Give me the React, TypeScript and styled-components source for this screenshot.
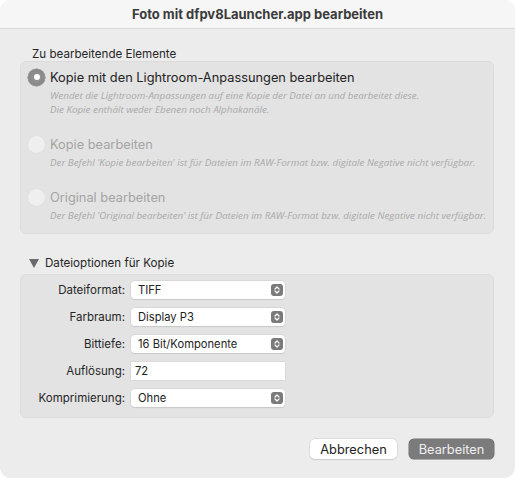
import React from "react";
import styled, { createGlobalStyle } from "styled-components";

const Global = createGlobalStyle`
  html, body { margin: 0; padding: 0; background: #ffffff; }
  body { font-family: Inter, "Liberation Sans", sans-serif; -webkit-font-smoothing: antialiased; }
  * { box-sizing: border-box; }
`;

const Window = styled.div`
  width: 515px;
  height: 478px;
  background: #ececec;
  border-radius: 11px;
  overflow: hidden;
  display: flex;
  flex-direction: column;
`;

const TitleBar = styled.div`
  height: 29px;
  flex: none;
  background: #f6f6f6;
  border-bottom: 1px solid #d9d9d9;
  display: flex;
  align-items: center;
  justify-content: center;
  font-size: 13px;
  font-weight: 700;
  color: #3b3b3b;
`;

const Body = styled.div`
  width: 515px;
  padding: 0 21px 0 20px;
  display: flex;
  flex-direction: column;
`;

const SectionLabel = styled.div<{ $top: number }>`
  font-size: 11.6px;
  color: #262626;
  height: 16px;
  line-height: 16px;
  margin-top: ${(p) => p.$top}px;
  padding-left: 12px;
  display: flex;
  align-items: center;
  gap: 6px;
`;

const Group = styled.div<{ $h: number; $top: number }>`
  margin-top: ${(p) => p.$top}px;
  height: ${(p) => p.$h}px;
  background: #e3e3e3;
  border: 1px solid #dcdcdc;
  border-radius: 6px;
  overflow: hidden;
`;

const OptionList = styled.div`
  display: flex;
  flex-direction: column;
  padding: 6px 0 0 7px;
`;

const Option = styled.div<{ $gap: number }>`
  margin-bottom: ${(p) => p.$gap}px;
`;

const OptionHead = styled.div`
  display: flex;
  align-items: center;
  gap: 5px;
  height: 18px;
`;

const Radio = styled.span<{ $on?: boolean }>`
  width: 17px;
  height: 17px;
  border-radius: 50%;
  flex: none;
  display: flex;
  align-items: center;
  justify-content: center;
  background: ${(p) =>
    p.$on ? "radial-gradient(circle, #9a9a9a 0%, #7d7d7d 100%)" : "#efefef"};
  box-shadow: ${(p) => (p.$on ? "0 0 0 0.5px #777" : "0 0 0 0.5px #dcdcdc")};
  &::after {
    content: "";
    display: ${(p) => (p.$on ? "block" : "none")};
    width: 6px;
    height: 6px;
    border-radius: 50%;
    background: #fff;
  }
`;

const OptionTitle = styled.span<{ $dim?: boolean }>`
  font-size: 12.8px;
  color: ${(p) => (p.$dim ? "#a3a3a3" : "#222")};
`;

const Desc = styled.div`
  margin: 3px 0 0 22px;
  font-family: "Open Sans", "Liberation Sans", sans-serif;
  font-style: italic;
  font-size: 9.8px;
  line-height: 14px;
  color: #a9a9a9;
`;

const Triangle = styled.span`
  width: 0;
  height: 0;
  border-left: 5px solid transparent;
  border-right: 5px solid transparent;
  border-top: 9px solid #6a6a6a;
  margin-left: -3px;
`;

const Form = styled.div`
  display: grid;
  grid-template-columns: 104px 154px;
  column-gap: 6px;
  row-gap: 9px;
  padding-top: 6px;
  align-items: center;
`;

const FieldLabel = styled.div`
  text-align: right;
  font-size: 11.5px;
  color: #262626;
`;

const Popup = styled.div`
  height: 18px;
  background: #fff;
  border-radius: 4px;
  box-shadow: 0 0 0 0.5px #cfcfcf, 0 0.5px 1px rgba(0, 0, 0, 0.15);
  display: flex;
  align-items: center;
  justify-content: space-between;
  padding: 0 2px 0 7px;
  font-size: 11.2px;
  color: #222;
`;

const Stepper = styled.span`
  width: 12px;
  height: 12px;
  border-radius: 3px;
  background: #7a7a7a;
  display: flex;
  align-items: center;
  justify-content: center;
`;

const TextField = styled.div`
  height: 18px;
  background: #fff;
  box-shadow: 0 0 0 0.5px #cfcfcf;
  display: flex;
  align-items: center;
  padding: 0 4px;
  font-size: 11.2px;
  color: #222;
`;

const Footer = styled.div`
  display: flex;
  justify-content: flex-end;
  gap: 12px;
  margin-top: 21px;
`;

const Button = styled.div<{ $primary?: boolean }>`
  height: 20px;
  padding: 0 10px;
  border-radius: 5px;
  display: flex;
  align-items: center;
  justify-content: center;
  font-size: 12.8px;
  width: ${(p) => (p.$primary ? "85px" : "87px")};
  background: ${(p) => (p.$primary ? "#7b7b7b" : "#ffffff")};
  color: ${(p) => (p.$primary ? "#f0f0f0" : "#222")};
  box-shadow: ${(p) =>
    p.$primary ? "0 0 0 0.5px #6c6c6c" : "0 0 0 0.5px #d0d0d0, 0 0.5px 1px rgba(0,0,0,0.15)"};
`;

const StepIcon = () => (
  <svg width="8" height="10" viewBox="0 0 8 10">
    <path d="M2 4 L4 2 L6 4 M2 6 L4 8 L6 6" fill="none" stroke="#fff" strokeWidth="1.2" strokeLinecap="round" strokeLinejoin="round" />
  </svg>
);

const Select = ({ value }: { value: string }) => (
  <Popup>
    <span>{value}</span>
    <Stepper>
      <StepIcon />
    </Stepper>
  </Popup>
);

export default function App() {
  return (
    <>
      <Global />
      <Window>
        <TitleBar>Foto mit dfpv8Launcher.app bearbeiten</TitleBar>
        <Body>
          <SectionLabel $top={17}>Zu bearbeitende Elemente</SectionLabel>
          <Group $h={173} $top={-1}>
            <OptionList>
              <Option $gap={18}>
                <OptionHead>
                  <Radio $on />
                  <OptionTitle>Kopie mit den Lightroom-Anpassungen bearbeiten</OptionTitle>
                </OptionHead>
                <Desc>
                  Wendet die Lightroom-Anpassungen auf eine Kopie der Datei an und bearbeitet diese.
                  <br />
                  Die Kopie enthält weder Ebenen noch Alphakanäle.
                </Desc>
              </Option>
              <Option $gap={18}>
                <OptionHead>
                  <Radio />
                  <OptionTitle $dim>Kopie bearbeiten</OptionTitle>
                </OptionHead>
                <Desc>
                  Der Befehl 'Kopie bearbeiten' ist für Dateien im RAW-Format bzw. digitale Negative nicht verfügbar.
                </Desc>
              </Option>
              <Option $gap={0}>
                <OptionHead>
                  <Radio />
                  <OptionTitle $dim>Original bearbeiten</OptionTitle>
                </OptionHead>
                <Desc>
                  Der Befehl 'Original bearbeiten' ist für Dateien im RAW-Format bzw. digitale Negative nicht verfügbar.
                </Desc>
              </Option>
            </OptionList>
          </Group>
          <SectionLabel $top={21}>
            <Triangle />
            Dateioptionen für Kopie
          </SectionLabel>
          <Group $h={144} $top={3}>
            <Form>
              <FieldLabel>Dateiformat:</FieldLabel>
              <Select value="TIFF" />
              <FieldLabel>Farbraum:</FieldLabel>
              <Select value="Display P3" />
              <FieldLabel>Bittiefe:</FieldLabel>
              <Select value="16 Bit/Komponente" />
              <FieldLabel>Auflösung:</FieldLabel>
              <TextField>72</TextField>
              <FieldLabel>Komprimierung:</FieldLabel>
              <Select value="Ohne" />
            </Form>
          </Group>
          <Footer>
            <Button>Abbrechen</Button>
            <Button $primary>Bearbeiten</Button>
          </Footer>
        </Body>
      </Window>
    </>
  );
}
